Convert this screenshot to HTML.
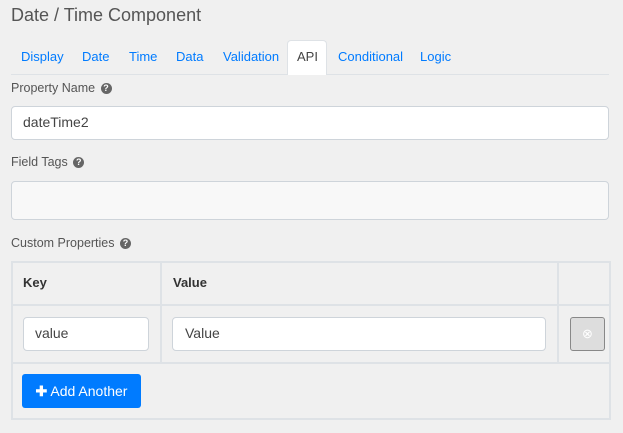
<!DOCTYPE html>
<html><head><style>
*{box-sizing:border-box;margin:0;padding:0}
body{width:623px;height:433px;background:#f0f0f0;font-family:"Liberation Sans",sans-serif;position:relative;overflow:hidden;color:#333}
.a{position:absolute}
.t{left:11px;top:5px;font-size:18px;color:#555}
.tab{top:40px;height:35px;font-size:13px;color:#007bff;line-height:33px}
.lbl{left:11px;font-size:12.5px;color:#555}
.q{display:inline-block;width:11px;height:11px;border-radius:50%;background:#666;color:#fff;font-size:9px;line-height:11px;text-align:center;font-weight:bold;vertical-align:1px;margin-left:2px}
.inp{background:#fff;border:1px solid #ced4da;border-radius:4px;font-size:14px;padding-left:11px;line-height:31px;color:#444}
.ln{background:#dee2e6}
</style></head><body>
<div class="a t">Date / Time Component</div>
<div class="a ln" style="left:11px;top:74px;width:598px;height:1px"></div>
<div class="a" style="left:287px;top:40px;width:40px;height:35px;background:#fff;border:1px solid #dee2e6;border-bottom:none;border-radius:4px 4px 0 0"></div>
<div class="a tab" style="left:21px">Display</div>
<div class="a tab" style="left:82px">Date</div>
<div class="a tab" style="left:129px">Time</div>
<div class="a tab" style="left:176px">Data</div>
<div class="a tab" style="left:223px">Validation</div>
<div class="a tab" style="left:297px;color:#444">API</div>
<div class="a tab" style="left:338px">Conditional</div>
<div class="a tab" style="left:420px">Logic</div>
<div class="a lbl" style="top:81px">Property Name <span class="q">?</span></div>
<div class="a inp" style="left:11px;top:106px;width:598px;height:34px">dateTime2</div>
<div class="a lbl" style="top:155px">Field Tags <span class="q">?</span></div>
<div class="a inp" style="left:11px;top:181px;width:598px;height:39px;background:#f8f8f8"></div>
<div class="a lbl" style="top:236px">Custom Properties <span class="q">?</span></div>
<div class="a" style="left:11px;top:261px;width:600px;height:159px;border:2px solid #dee2e6;border-top-width:2px"></div>
<div class="a ln" style="left:11px;top:304px;width:600px;height:2px"></div>
<div class="a ln" style="left:11px;top:362px;width:600px;height:2px"></div>
<div class="a ln" style="left:160px;top:261px;width:2px;height:102px"></div>
<div class="a ln" style="left:557px;top:261px;width:2px;height:102px"></div>
<div class="a" style="left:23px;top:275px;font-size:13px;font-weight:bold">Key</div>
<div class="a" style="left:173px;top:275px;font-size:13px;font-weight:bold">Value</div>
<div class="a inp" style="left:23px;top:317px;width:126px;height:34px">value</div>
<div class="a inp" style="left:172px;top:317px;width:374px;height:34px;padding-left:12px">Value</div>
<div class="a" style="left:570px;top:317px;width:35px;height:34px;background:#ddd;border:1px solid #888;border-radius:3px;color:#fff;font-size:13px;text-align:center;line-height:32px">⊗</div>
<div class="a" style="left:22px;top:374px;width:119px;height:34px;background:#007bff;border-radius:3px;color:#fff;font-size:14px;line-height:34px;text-align:center"><b>✚</b> Add Another</div>
</body></html>
